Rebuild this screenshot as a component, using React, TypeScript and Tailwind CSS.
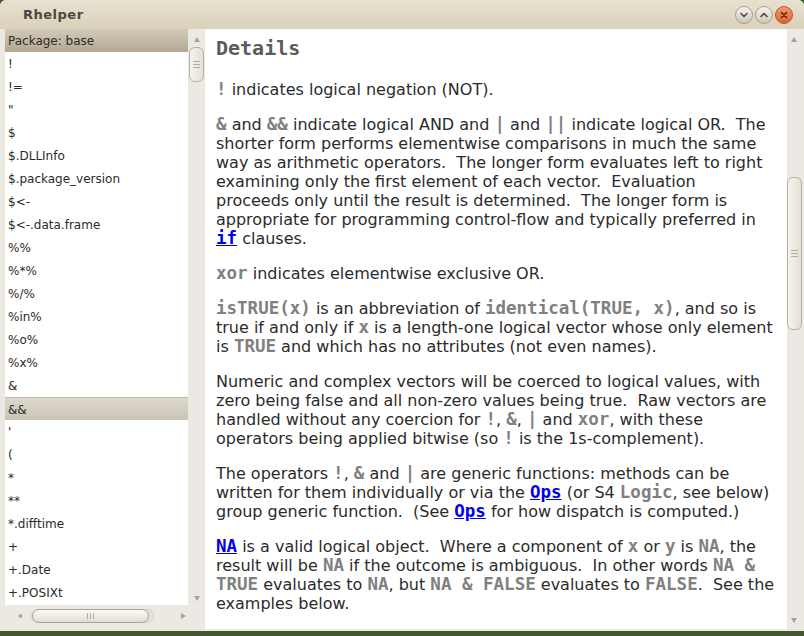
import React from "react";

const ITEMS = [
  "!", "!=", "\"", "$", "$.DLLInfo", "$.package_version", "$<-", "$<-.data.frame",
  "%%", "%*%", "%/%", "%in%", "%o%", "%x%", "&", "&&", "'", "(", "*", "**",
  "*.difftime", "+", "+.Date", "+.POSIXt",
];

const SANS = "font-['DejaVu_Sans',sans-serif]";

function C({ children }: { children: React.ReactNode }) {
  return (
    <span className="font-['DejaVu_Sans_Mono',monospace] font-bold text-[#808080] text-[17.5px]">
      {children}
    </span>
  );
}

function L({ children }: { children: React.ReactNode }) {
  return (
    <span className="font-['DejaVu_Sans_Mono',monospace] font-bold text-[#0000ee] text-[17.5px] underline">
      {children}
    </span>
  );
}

function Para({ lines }: { lines: React.ReactNode[] }) {
  return (
    <div className="mb-[16px]">
      {lines.map((l, i) => (
        <div key={i} className="h-[19px] leading-[19px] whitespace-pre">
          {l}
        </div>
      ))}
    </div>
  );
}

function Arrow({ dir }: { dir: "up" | "down" | "left" | "right" }) {
  const pts = {
    up: "1,6 4,1 7,6",
    down: "1,1 4,6 7,1",
    left: "6,1 1,4 6,7",
    right: "1,1 6,4 1,7",
  }[dir];
  return (
    <svg width="8" height="8" viewBox="0 0 8 8">
      <polygon points={pts} fill="#a8a39a" />
    </svg>
  );
}

function VThumb({ h }: { h: number }) {
  return (
    <div
      className="w-[15px] rounded-[6px] border border-[#b8b1a4] bg-gradient-to-r from-[#f6f4f0] to-[#e4dfd6] flex flex-col items-center justify-center gap-[2px]"
      style={{ height: h }}
    >
      <div className="w-[7px] h-px bg-[#b4ad9f]" />
      <div className="w-[7px] h-px bg-[#b4ad9f]" />
      <div className="w-[7px] h-px bg-[#b4ad9f]" />
    </div>
  );
}

function WinBtn({ kind }: { kind: "min" | "max" | "close" }) {
  if (kind === "close") {
    return (
      <div className="w-[18px] h-[18px] rounded-full bg-gradient-to-b from-[#f49a6a] to-[#e0622a] border border-[#b5562a] flex items-center justify-center">
        <svg width="10" height="10" viewBox="0 0 10 10">
          <path d="M2.5 2.5 L7.5 7.5 M7.5 2.5 L2.5 7.5" stroke="#5a2a14" strokeWidth="1.6" strokeLinecap="round" />
        </svg>
      </div>
    );
  }
  return (
    <div className="w-[18px] h-[18px] rounded-full bg-gradient-to-b from-[#f6f4ee] to-[#cfc8b8] border border-[#a8a090] flex items-center justify-center">
      <svg width="10" height="10" viewBox="0 0 10 10">
        <path
          d={kind === "min" ? "M2 3.5 L5 6.5 L8 3.5" : "M2 6.5 L5 3.5 L8 6.5"}
          stroke="#4a4640"
          strokeWidth="1.6"
          fill="none"
          strokeLinecap="round"
          strokeLinejoin="round"
        />
      </svg>
    </div>
  );
}

export default function App() {
  return (
    <div className="w-[804px] h-[636px] overflow-hidden bg-[#3d5a2a]">
      <div className={`w-[804px] h-[631px] bg-[#ece9e3] rounded-t-[6px] flex flex-col ${SANS}`}>
        {/* Title bar */}
        <div className="h-[29px] shrink-0 rounded-t-[6px] bg-gradient-to-b from-[#e8e1d0] to-[#dad1bb] flex items-center pl-[23px] pr-[11px]">
          <span className="text-[13px] font-bold text-[#4a4742] tracking-[0.5px] mt-[1px]">Rhelper</span>
          <div className="ml-auto flex gap-[2px]">
            <WinBtn kind="min" />
            <WinBtn kind="max" />
            <WinBtn kind="close" />
          </div>
        </div>

        {/* Body */}
        <div className="flex flex-1 pl-[5px] pb-[4px]">
          {/* Left column */}
          <div className="w-[200px] flex flex-col">
            <div className="flex h-[576px]">
              <div className="w-[183px] bg-white flex flex-col overflow-hidden">
                <div className="h-[23px] shrink-0 bg-gradient-to-b from-[#d2cabb] to-[#b2a792] flex items-center pl-[3px] text-[12px] text-[#2e2b27]">
                  Package: base
                </div>
                {ITEMS.map((it, i) => (
                  <div
                    key={i}
                    className={`h-[23px] shrink-0 flex items-center pl-[3px] pt-[1px] text-[12px] text-[#2a2a2a] whitespace-pre ${
                      it === "&&" ? "bg-gradient-to-b from-[#dcd7cc] to-[#cbc5b8] border-t border-[#bfb8aa]" : ""
                    }`}
                  >
                    {it}
                  </div>
                ))}
              </div>
              <div className="w-[17px] flex flex-col items-center bg-[#ece9e3]">
                <div className="h-[15px] flex items-end"><Arrow dir="up" /></div>
                <div className="mt-[3px]"><VThumb h={35} /></div>
                <div className="mt-auto mb-[2px]"><Arrow dir="down" /></div>
              </div>
            </div>
            {/* Horizontal scrollbar */}
            <div className="h-[22px] flex items-center pl-[12px] w-[183px]">
              <Arrow dir="left" />
              <div className="ml-[7px] w-[150px] h-[14px] rounded-[7px] border border-[#d6d0c5] bg-[#e6e2da] relative">
                <div className="absolute left-0 top-[-1px] w-[117px] h-[14px] rounded-[7px] border border-[#aaa395] bg-gradient-to-b from-[#fbfaf7] to-[#e2ddd3] flex items-center justify-center gap-[2px]">
                  <div className="w-px h-[6px] bg-[#b4ad9f]" />
                  <div className="w-px h-[6px] bg-[#b4ad9f]" />
                  <div className="w-px h-[6px] bg-[#b4ad9f]" />
                </div>
              </div>
              <div className="ml-[26px]"><Arrow dir="right" /></div>
            </div>
          </div>

          {/* Right pane */}
          <div className="w-[596px] flex">
            <div className="w-[582px] bg-white pl-[11px] pt-[6px] text-[16px] text-[#2b2b2b] overflow-hidden">
              <div className="font-['DejaVu_Sans_Mono',monospace] font-bold text-[20px] text-[#5c5c5c] h-[26px] leading-[26px] mb-[19px]">
                Details
              </div>
              <Para lines={[<><C>!</C> indicates logical negation (NOT).</>]} />
              <Para
                lines={[
                  <><C>&amp;</C> and <C>&amp;&amp;</C> indicate logical AND and <C>|</C> and <C>||</C> indicate logical OR.  The</>,
                  "shorter form performs elementwise comparisons in much the same",
                  "way as arithmetic operators.  The longer form evaluates left to right",
                  "examining only the first element of each vector.  Evaluation",
                  "proceeds only until the result is determined.  The longer form is",
                  "appropriate for programming control-flow and typically preferred in",
                  <><L>if</L> clauses.</>,
                ]}
              />
              <Para lines={[<><C>xor</C> indicates elementwise exclusive OR.</>]} />
              <Para
                lines={[
                  <><C>isTRUE(x)</C> is an abbreviation of <C>identical(TRUE, x)</C>, and so is</>,
                  <>true if and only if <C>x</C> is a length-one logical vector whose only element</>,
                  <>is <C>TRUE</C> and which has no attributes (not even names).</>,
                ]}
              />
              <Para
                lines={[
                  "Numeric and complex vectors will be coerced to logical values, with",
                  "zero being false and all non-zero values being true.  Raw vectors are",
                  <>handled without any coercion for <C>!</C>, <C>&amp;</C>, <C>|</C> and <C>xor</C>, with these</>,
                  <>operators being applied bitwise (so <C>!</C> is the 1s-complement).</>,
                ]}
              />
              <Para
                lines={[
                  <>The operators <C>!</C>, <C>&amp;</C> and <C>|</C> are generic functions: methods can be</>,
                  <>written for them individually or via the <L>Ops</L> (or S4 <C>Logic</C>, see below)</>,
                  <>group generic function.  (See <L>Ops</L> for how dispatch is computed.)</>,
                ]}
              />
              <Para
                lines={[
                  <><L>NA</L> is a valid logical object.  Where a component of <C>x</C> or <C>y</C> is <C>NA</C>, the</>,
                  <>result will be <C>NA</C> if the outcome is ambiguous.  In other words <C>NA &amp;</C></>,
                  <><C>TRUE</C> evaluates to <C>NA</C>, but <C>NA &amp; FALSE</C> evaluates to <C>FALSE</C>.  See the</>,
                  "examples below.",
                ]}
              />
            </div>
            <div className="w-[14px] flex flex-col items-center bg-[#ece9e3]">
              <div className="h-[15px] flex items-end"><Arrow dir="up" /></div>
              <div className="mt-[133px]"><VThumb h={153} /></div>
              <div className="mt-auto mb-[4px]"><Arrow dir="down" /></div>
            </div>
          </div>
        </div>
      </div>
    </div>
  );
}
